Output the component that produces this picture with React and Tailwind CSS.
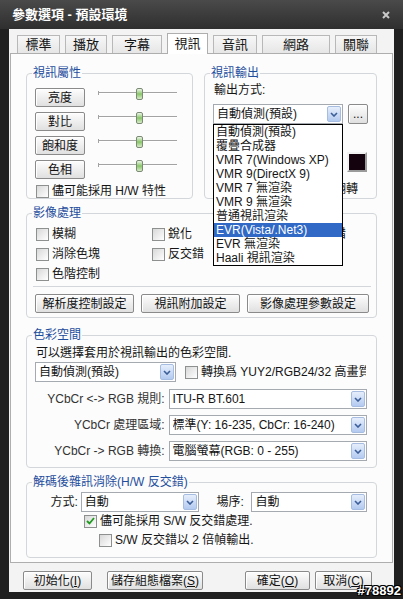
import React from 'react';

const tabs = [
  { label: '標準', w: 'w-[43px]' },
  { label: '播放', w: 'w-[42px]' },
  { label: '字幕', w: 'w-[50px]' },
  { label: '視訊', w: 'w-[41px]', active: true },
  { label: '音訊', w: 'w-[44px]' },
  { label: '網路', w: 'w-[68px]' },
  { label: '關聯', w: 'w-[42px]' },
];

const outputs = [
  '自動偵測(預設)',
  '覆疊合成器',
  'VMR 7(Windows XP)',
  'VMR 9(DirectX 9)',
  'VMR 7 無渲染',
  'VMR 9 無渲染',
  '普通視訊渲染',
  'EVR(Vista/.Net3)',
  'EVR 無渲染',
  'Haali 視訊渲染',
];

const Chevron = () => (
  <svg width="8" height="5" viewBox="0 0 8 5">
    <path d="M1 1l3 3 3-3" fill="none" stroke="#3b5d98" strokeWidth="1.6" />
  </svg>
);

// combo box with the blue arrow button
const Select = ({ value, className = '' }) => (
  <div className={`h-[20px] bg-white border border-[#a5a9b0] flex items-center justify-between pl-[3px] pr-[1px] ${className}`}>
    <span className="text-[12px] leading-[14px] whitespace-nowrap overflow-hidden">{value}</span>
    <span className="w-[14px] h-[16px] shrink-0 border border-[#a6bce0] rounded-[2px] bg-linear-to-b from-[#e6eefb] to-[#b3caf0] flex items-center justify-center">
      <Chevron />
    </span>
  </div>
);

const Box = ({ checked }) => (
  <span className="w-[13px] h-[13px] shrink-0 border border-[#8e8f8f] bg-linear-to-br from-[#d8d8d8] to-white flex items-center justify-center">
    {checked && (
      <svg width="9" height="8" viewBox="0 0 9 8">
        <path d="M1 4l2.5 2.5L8 1" fill="none" stroke="#1f9a1f" strokeWidth="1.8" />
      </svg>
    )}
  </span>
);

const Check = ({ label, checked, className = '' }) => (
  <div className={`flex items-center gap-[3px] h-[14px] ${className}`}>
    <Box checked={checked} />
    <span className="text-[12px] leading-[14px] whitespace-nowrap">{label}</span>
  </div>
);

const Btn = ({ children, className = '' }) => (
  <button className={`h-[19px] shrink-0 border border-[#8a8a8a] rounded-[2px] bg-linear-to-b from-[#fdfdfd] to-[#e0e0e0] shadow-[inset_1px_1px_0_#fff] text-[12px] leading-[14px] text-[#111] flex items-center justify-center whitespace-nowrap ${className}`}>
    {children}
  </button>
);

const Slider = () => (
  <div className="relative w-[79px] h-[19px] ml-[13px]">
    <div className="absolute left-0 right-0 top-[4px] h-[2px] border-t border-[#a3a3a3] bg-white" />
    <div className="absolute left-0 top-[3px] w-px h-[4px] bg-[#a3a3a3]" />
    <div className="absolute left-[38px] top-0 w-[7px] h-[12px] rounded-[2px] border border-[#7a8a74] bg-linear-to-b from-[#eef6e6] via-[#88c467] to-[#d9ecc9]" />
  </div>
);

const Group = ({ title, className = '', children }) => (
  <fieldset className={`border border-[#d3d6da] rounded-[4px] min-w-0 ${className}`}>
    <legend className="ml-[5px] px-[1px] text-[12px] leading-[14px] text-[#1f4e9c]">{title}</legend>
    {children}
  </fieldset>
);

const App = () => {
  return (
    <div className="relative w-[403px] h-[599px] bg-[#202020] flex flex-col text-[#151515] font-['Liberation_Sans','Noto_Sans_CJK_TC',sans-serif]">
      {/* Title bar */}
      <div className="h-[29px] shrink-0 flex items-center justify-between pl-[12px] pr-[13px] bg-linear-to-b from-[#4a4a4a] to-[#2f2f2f]">
        <span className="text-white font-bold text-[13px] leading-[16px]">參數選項 - 預設環境</span>
        <svg width="8" height="8" viewBox="0 0 8 8">
          <path d="M1 1l6 6M7 1L1 7" stroke="#c9c9c9" strokeWidth="2" />
        </svg>
      </div>

      <div className="mx-[9px] flex-1 flex flex-col bg-[#f3f3f3]">
        {/* Tabs */}
        <div className="h-[24px] pt-[4px] pl-[8px] flex items-end gap-[5px]">
          {tabs.map(t =>
            t.active ? (
              <div key={t.label} className={`${t.w} h-[21px] -mb-px relative z-10 bg-white border border-b-0 border-[#aeaeae] flex items-center justify-center text-[13px] leading-[16px]`}>
                {t.label}
              </div>
            ) : (
              <div key={t.label} className={`${t.w} h-[18px] bg-linear-to-b from-[#f7f7f7] to-[#e6e6e6] border border-b-0 border-[#b8b8b8] flex items-center justify-center text-[13px] leading-[16px]`}>
                {t.label}
              </div>
            )
          )}
        </div>

        {/* Tab page */}
        <div className="mx-[1px] bg-[#fcfcfc] border border-[#aeaeae] pt-[12px] px-[15px] pb-[4px] flex flex-col">
          <div className="flex gap-[11px]">
            <Group title="視訊屬性" className="w-[167px]">
              <div className="pt-[8px] pl-[8px] flex flex-col">
                <div className="flex flex-col gap-[5px]">
                  {['亮度', '對比', '飽和度', '色相'].map(l => (
                    <div key={l} className="flex items-start">
                      <Btn className="w-[50px]">{l}</Btn>
                      <Slider />
                    </div>
                  ))}
                </div>
                <Check label="儘可能採用 H/W 特性" className="mt-[5px] ml-px" />
              </div>
            </Group>

            <Group title="視訊輸出" className="w-[173px]">
              <div className="pt-[3px] pl-[8px] pr-[9px] flex flex-col">
                <div className="text-[12px] leading-[14px] pl-px">輸出方式:</div>
                <div className="mt-[7px] flex items-center gap-[5px]">
                  <div className="relative z-20">
                    <Select value="自動偵測(預設)" className="w-[130px]" />
                    {/* open drop-down list */}
                    <div className="absolute left-0 top-[20px] w-[130px] bg-white border border-black">
                      {outputs.map((o, i) => (
                        <div
                          key={o}
                          className={`h-[14px] pl-[2px] text-[12px] leading-[14px] whitespace-nowrap ${i === 7 ? 'bg-[#3169c6] text-white' : 'text-[#151515]'}`}
                        >
                          {o}
                        </div>
                      ))}
                    </div>
                  </div>
                  <Btn className="w-[20px] h-[20px] items-end pb-[2px]">...</Btn>
                </div>
                <div className="mt-[28px] h-[20px] flex items-center justify-between">
                  <span className="text-[12px] leading-[14px]">背景顏色:</span>
                  <div className="w-[20px] h-[20px] border-2 border-t-[#f2f2f2] border-l-[#f2f2f2] border-r-[#9a9a9a] border-b-[#9a9a9a] bg-[#14030f]" />
                </div>
                <div className="mt-[10px] pr-[9px] flex justify-end text-[12px] leading-[14px]">影像垂直翻轉</div>
              </div>
            </Group>
          </div>

          <Group title="影像處理" className="mt-[7px]">
            <div className="pt-[7px] pl-[8px] pr-[7px] pb-[4px] flex flex-col">
              <div className="grid grid-cols-[117px_118px_1fr] gap-y-[6px]">
                <Check label="模糊" className="ml-px" />
                <Check label="銳化" />
                <Check label="自動反交錯" />
                <Check label="消除色塊" className="ml-px" />
                <Check label="反交錯" />
                <div />
                <Check label="色階控制" className="ml-px" />
              </div>
              <div className="mt-[5px] -mx-[2px] h-px bg-[#d3d6da]" />
              <div className="mt-[7px] flex gap-[7px]">
                <Btn className="w-[99px]">解析度控制設定</Btn>
                <Btn className="w-[99px]">視訊附加設定</Btn>
                <Btn className="w-[122px]">影像處理參數設定</Btn>
              </div>
            </div>
          </Group>

          <Group title="色彩空間" className="mt-[10px]">
            <div className="pt-[4px] pl-[8px] pr-[9px] pb-[6px] flex flex-col">
              <div className="text-[12px] leading-[14px] pl-px">可以選擇套用於視訊輸出的色彩空間.</div>
              <div className="mt-[2px] flex items-center">
                <Select value="自動偵測(預設)" className="w-[141px]" />
                <div className="ml-[9px] w-[181px] overflow-hidden">
                  <Check label="轉換爲 YUY2/RGB24/32 高畫質" />
                </div>
              </div>
              {[
                ['YCbCr <-> RGB 規則:', 'ITU-R BT.601'],
                ['YCbCr 處理區域:', '標準(Y: 16-235, CbCr: 16-240)'],
                ['YCbCr -> RGB 轉換:', '電腦螢幕(RGB: 0 - 255)'],
              ].map(([l, v], i) => (
                <div key={l} className={`flex items-center gap-[4px] ${i === 0 ? 'mt-[7px]' : 'mt-[6px]'}`}>
                  <span className="w-[130px] text-right text-[12px] leading-[14px] text-[#333] whitespace-nowrap">{l}</span>
                  <Select value={v} className="w-[199px]" />
                </div>
              ))}
            </div>
          </Group>

          <Group title="解碼後雜訊消除(H/W 反交錯)" className="mt-[7px]">
            <div className="pt-[3px] pl-[8px] pr-[9px] pb-[10px] flex flex-col">
              <div className="flex items-center">
                <span className="w-[43px] text-right text-[12px] leading-[14px]">方式:</span>
                <Select value="自動" className="w-[119px] ml-[3px]" />
                <span className="w-[30px] ml-[17px] text-[12px] leading-[14px]">場序:</span>
                <Select value="自動" className="w-[116px] ml-[5px]" />
              </div>
              <Check label="儘可能採用 S/W 反交錯處理." checked className="mt-[2px] ml-[49px]" />
              <Check label="S/W 反交錯以 2 倍幀輸出." className="mt-[5px] ml-[64px]" />
            </div>
          </Group>
        </div>

        {/* Dialog buttons */}
        <div className="mt-[8px] mb-[2px] pl-[14px] flex items-center">
          <Btn className="w-[69px]">初始化(<span className="underline">I</span>)</Btn>
          <Btn className="w-[96px] ml-[15px]">儲存組態檔案(<span className="underline">S</span>)</Btn>
          <Btn className="w-[65px] ml-[42px]">確定(<span className="underline">O</span>)</Btn>
          <Btn className="w-[57px] ml-[5px]">取消(<span className="underline">C</span>)</Btn>
        </div>
      </div>
      <div className="h-[7px] shrink-0" />

      {/* watermark */}
      <span className="absolute right-[2px] bottom-[1px] text-white font-bold text-[13px] leading-[14px] font-['Liberation_Sans',sans-serif] [text-shadow:1px_1px_0_#000,-1px_-1px_0_#000,1px_-1px_0_#000,-1px_1px_0_#000]">
        #78892
      </span>
    </div>
  );
};

export default App;
